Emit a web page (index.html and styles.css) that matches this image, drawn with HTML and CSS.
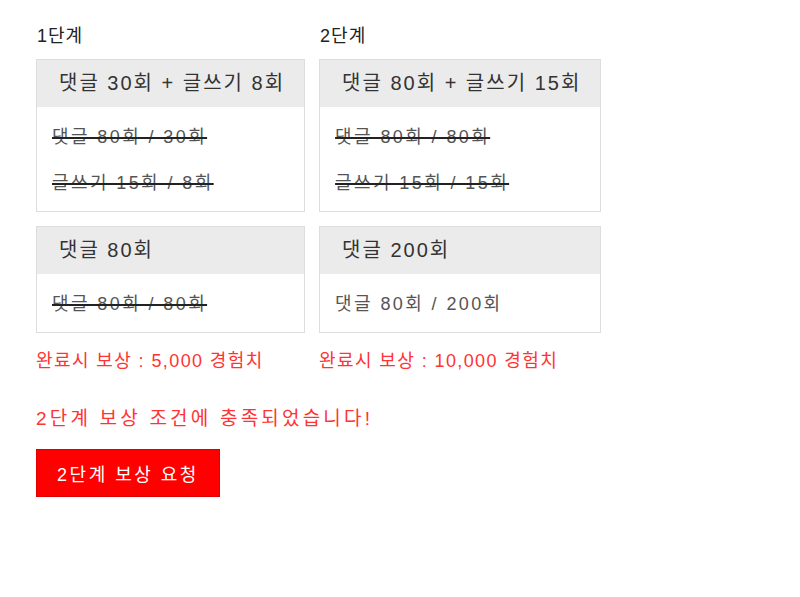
FILE: index.html
```html
<!DOCTYPE html>
<html lang="ko">
<head>
	<meta charset="UTF-8">
	<title>보상 단계</title>
	<link rel="stylesheet" href="styles.css">
</head>
<body>
	<div id="reward">
		<div class="steps">
			<div class="step">
				<h2>1단계</h2>
				<div class="mission">
					<div class="mission-title">댓글 30회 + 글쓰기 8회</div>
					<ul>
						<li class="done">댓글 80회 / 30회</li>
						<li class="done">글쓰기 15회 / 8회</li>
					</ul>
				</div>
				<div class="mission">
					<div class="mission-title">댓글 80회</div>
					<ul>
						<li class="done">댓글 80회 / 80회</li>
					</ul>
				</div>
				<p class="prize">완료시 보상 : 5,000 경험치</p>
			</div>
			<div class="step">
				<h2>2단계</h2>
				<div class="mission">
					<div class="mission-title">댓글 80회 + 글쓰기 15회</div>
					<ul>
						<li class="done">댓글 80회 / 80회</li>
						<li class="done">글쓰기 15회 / 15회</li>
					</ul>
				</div>
				<div class="mission">
					<div class="mission-title">댓글 200회</div>
					<ul>
						<li>댓글 80회 / 200회</li>
					</ul>
				</div>
				<p class="prize">완료시 보상 : 10,000 경험치</p>
			</div>
		</div>
		<p class="notice">2단계 보상 조건에 충족되었습니다!</p>
		<button class="btn-reward">2단계 보상 요청</button>
	</div>
</body>
</html>
```

FILE: styles.css
```css
body{
	margin: 0;
	font-family: "Liberation Sans", "Noto Sans CJK KR", sans-serif;
	color: #222;
	background: #fff;
}
ul,li{
	list-style: none;
	margin: 0;
	padding: 0;
}
#reward{padding: 24px 36px;}
#reward .steps{display: flex;gap: 14px;align-items: flex-start;}
#reward .step h2{margin: 0 0 11px 1px;font-size: 18px;font-weight: normal;line-height: 24px;color: #222;letter-spacing: 1px;}
.mission{border: 1px solid #ddd;margin-bottom: 14px;}
.mission-title{background: #ebebeb;padding: 0 19px 0 22px;height: 47px;line-height: 47px;font-size: 20px;color: #333;white-space: nowrap;letter-spacing: 2px;}
.mission ul{padding: 7px 15px 5px;}
.mission li{line-height: 46px;font-size: 18px;color: #555;letter-spacing: 2.4px;white-space: nowrap;}
.mission li.done{text-decoration: line-through;text-decoration-color: #222;text-decoration-thickness: 2px;}
.prize{margin: 0;font-size: 18px;color: #f33;line-height: 28px;letter-spacing: 1.4px;white-space: nowrap;}
.notice{margin: 30px 0 16px;font-size: 19px;color: #f33;line-height: 28px;letter-spacing: 3.2px;}
.btn-reward{
	width: 184px;
	height: 48px;
	border: 1px solid #d00;
	background: #f00;
	color: #fff;
	font-family: inherit;
	font-size: 18px;
	letter-spacing: 2.5px;
	padding: 0;
}
```
